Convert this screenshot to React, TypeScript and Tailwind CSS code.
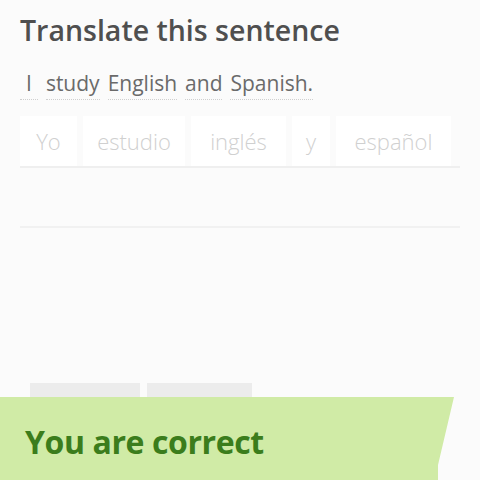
const sentence = ["I", "study", "English", "and", "Spanish."];

const tiles = [
  { word: "Yo", w: "w-[57px]" },
  { word: "estudio", w: "w-[102px]" },
  { word: "inglés", w: "w-[95px]" },
  { word: "y", w: "w-[38px]" },
  { word: "español", w: "w-[115px]" },
];

export default function App() {
  return (
    <div className="relative h-[480px] w-[480px] overflow-hidden bg-[#fbfbfb] font-['Open_Sans',sans-serif]">
      <div className="px-5 pt-[11px]">
        <h1 className="text-[28.5px] font-semibold leading-[38px] text-[#4f4f4f]">Translate this sentence</h1>

        <p className="mt-[21px] flex gap-[8px] text-[21px] leading-[26px] text-[#6a6a6a]">
          {sentence.map((w, i) => (
            <span key={i} className="border-b border-dotted border-[#cfcfcf] pb-[3px] first:px-[6px]">
              {w}
            </span>
          ))}
        </p>

        <div className="mt-[16px] flex h-[52px] gap-[6px] border-b-2 border-[#efefef]">
          {tiles.map((t) => (
            <div
              key={t.word}
              className={`${t.w} flex items-center justify-center bg-white text-[22px] font-light text-[#d0d0d0]`}
            >
              {t.word}
            </div>
          ))}
        </div>

        <div className="h-[60px] border-b-2 border-[#f1f1f1]" />

        <div className="ml-[10px] mt-[155px] flex gap-[7px]">
          <div className="h-[20px] w-[110px] bg-[#ececec]" />
          <div className="h-[20px] w-[105px] bg-[#ececec]" />
        </div>
      </div>

      <div className="absolute bottom-0 left-0 flex h-[83px] w-[455px] items-center bg-[#d0eba6] pl-[25px] pt-[6px] [clip-path:polygon(0_0,454px_0,438px_68px,438px_83px,0_83px)]">
        <span className="text-[32px] font-bold tracking-[-0.4px] text-[#3b7d1c]">You are correct</span>
      </div>
    </div>
  );
}
